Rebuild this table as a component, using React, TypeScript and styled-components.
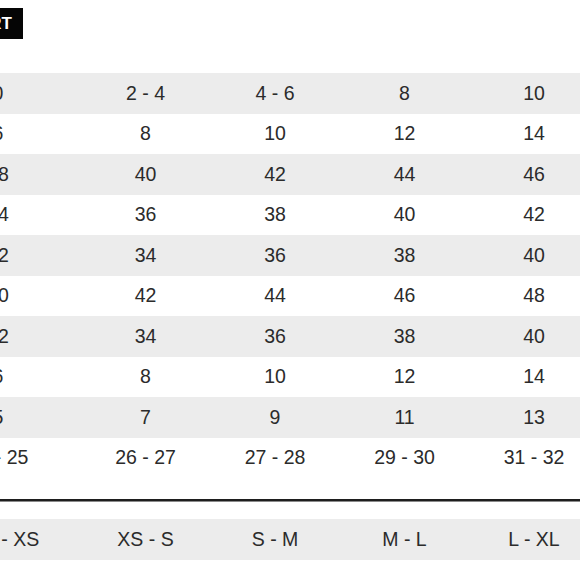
import styled, { createGlobalStyle } from 'styled-components';

const GlobalStyle = createGlobalStyle`
  html, body {
    margin: 0;
    padding: 0;
    background: #ffffff;
    overflow: hidden;
  }
  body {
    font-family: 'Liberation Sans', Arial, sans-serif;
    color: #2b2b2b;
  }
`;

const rows: string[][] = [
  ['0', '2 - 4', '4 - 6', '8', '10'],
  ['6', '8', '10', '12', '14'],
  ['38', '40', '42', '44', '46'],
  ['34', '36', '38', '40', '42'],
  ['32', '34', '36', '38', '40'],
  ['40', '42', '44', '46', '48'],
  ['32', '34', '36', '38', '40'],
  ['6', '8', '10', '12', '14'],
  ['5', '7', '9', '11', '13'],
  ['24 - 25', '26 - 27', '27 - 28', '29 - 30', '31 - 32'],
];

const letterSizes = ['XXS - XS', 'XS - S', 'S - M', 'M - L', 'L - XL'];

export default function App() {
  return (
    <>
      <GlobalStyle />
      <Page>
        <TitleBar>
          <Badge>SIZE CHART</Badge>
        </TitleBar>
        <Table>
          {rows.map((row, i) => (
            <Row key={i} $shaded={i % 2 === 0}>
              {row.map((cell, j) => (
                <Cell key={j}>{cell}</Cell>
              ))}
            </Row>
          ))}
        </Table>
        <Divider />
        <Table>
          <Row $shaded>
            {letterSizes.map((cell, j) => (
              <Cell key={j}>{cell}</Cell>
            ))}
          </Row>
        </Table>
      </Page>
    </>
  );
}

const Page = styled.div`
  width: 580px;
  height: 580px;
  padding-top: 8px;
  box-sizing: border-box;
  overflow: hidden;
`;

const TitleBar = styled.div`
  display: flex;
  height: 31px;
  margin-bottom: 34px;
`;

// only the tail of the badge shows at the left edge
const Badge = styled.div`
  display: flex;
  align-items: center;
  margin-left: -100px;
  padding: 0 11px 0 10px;
  background: #050505;
  color: #ffffff;
  font-weight: 700;
  font-size: 17px;
  white-space: nowrap;
`;

const Table = styled.div`
  display: flex;
  flex-direction: column;
  margin-left: -84.75px;
  width: 683.5px;
`;

const Row = styled.div<{ $shaded?: boolean }>`
  display: grid;
  grid-template-columns: 165.5px repeat(4, 129.5px);
  align-items: center;
  height: 40.5px;
  background: ${(p) => (p.$shaded ? '#ececec' : '#ffffff')};
`;

const Cell = styled.div`
  text-align: center;
  font-size: 19.5px;
  white-space: nowrap;
`;

const Divider = styled.div`
  height: 2px;
  margin: 21px 0 17px;
  background: #1e1e1e;
  border-bottom: 1px solid #8a8a8a;
`;
